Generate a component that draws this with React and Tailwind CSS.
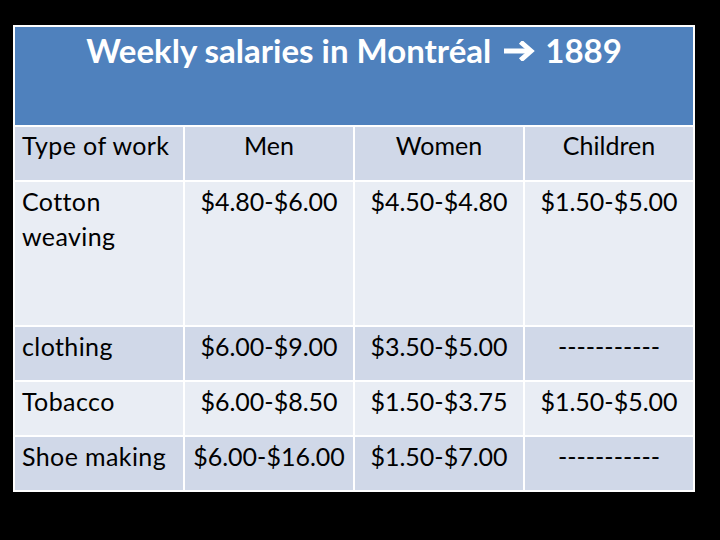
const rows = [
  { type: ['Cotton', 'weaving'], men: '$4.80-$6.00', women: '$4.50-$4.80', kids: '$1.50-$5.00', tall: true, bg: 'bg-[#e9edf4]' },
  { type: ['clothing'], men: '$6.00-$9.00', women: '$3.50-$5.00', kids: '-----------', bg: 'bg-[#d0d8e8]' },
  { type: ['Tobacco'], men: '$6.00-$8.50', women: '$1.50-$3.75', kids: '$1.50-$5.00', bg: 'bg-[#e9edf4]' },
  { type: ['Shoe making'], men: '$6.00-$16.00', women: '$1.50-$7.00', kids: '-----------', bg: 'bg-[#d0d8e8]' },
]

function Arrow() {
  return (
    <svg width="32" height="20" viewBox="0 0 32 20" className="ml-[12px] mr-[10px] inline-block">
      <path d="M1 10H27" stroke="white" strokeWidth="5" />
      <path d="M19.5 2.5L28 10L19.5 17.5" stroke="white" strokeWidth="5" fill="none" strokeLinecap="square" />
    </svg>
  )
}

export default function App() {
  return (
    <div className="w-[720px] h-[540px] bg-black pt-[25px] pl-[13px] font-['Lato',sans-serif] text-[25px] text-black">
      <div className="w-[682px] bg-white p-[2px] grid grid-cols-[168px_168px_168px_168px] gap-[2px]">
        <div className="col-span-4 h-[98px] bg-[#4f81bd] text-white font-bold text-[33px] flex justify-center items-start pt-[3px] leading-[40px]">
          <span>Weekly salaries in Montréal</span>
          <span className="flex items-center h-[40px] pt-[2px]"><Arrow /></span>
          <span>1889</span>
        </div>

        <div className="h-[53px] bg-[#d0d8e8] pl-[7px] pt-[1px] leading-[35px] tracking-[0.4px]">Type of work</div>
        <div className="h-[53px] bg-[#d0d8e8] text-center pt-[1px] leading-[35px]">Men</div>
        <div className="h-[53px] bg-[#d0d8e8] text-center pt-[1px] leading-[35px]">Women</div>
        <div className="h-[53px] bg-[#d0d8e8] text-center pt-[1px] leading-[35px]">Children</div>

        {rows.map(row => (
          <div key={row.type[0]} className="contents">
            <div className={`${row.tall ? 'h-[143px]' : 'h-[53px]'} ${row.bg} pl-[7px] pt-[2px] leading-[35px] tracking-[0.4px]`}>
              {row.type.map(t => <div key={t}>{t}</div>)}
            </div>
            <div className={`${row.tall ? 'h-[143px]' : 'h-[53px]'} ${row.bg} text-center pt-[2px] leading-[35px]`}>{row.men}</div>
            <div className={`${row.tall ? 'h-[143px]' : 'h-[53px]'} ${row.bg} text-center pt-[2px] leading-[35px]`}>{row.women}</div>
            <div className={`${row.tall ? 'h-[143px]' : 'h-[53px]'} ${row.bg} text-center pt-[2px] leading-[35px]`}>{row.kids}</div>
          </div>
        ))}
      </div>
    </div>
  )
}
